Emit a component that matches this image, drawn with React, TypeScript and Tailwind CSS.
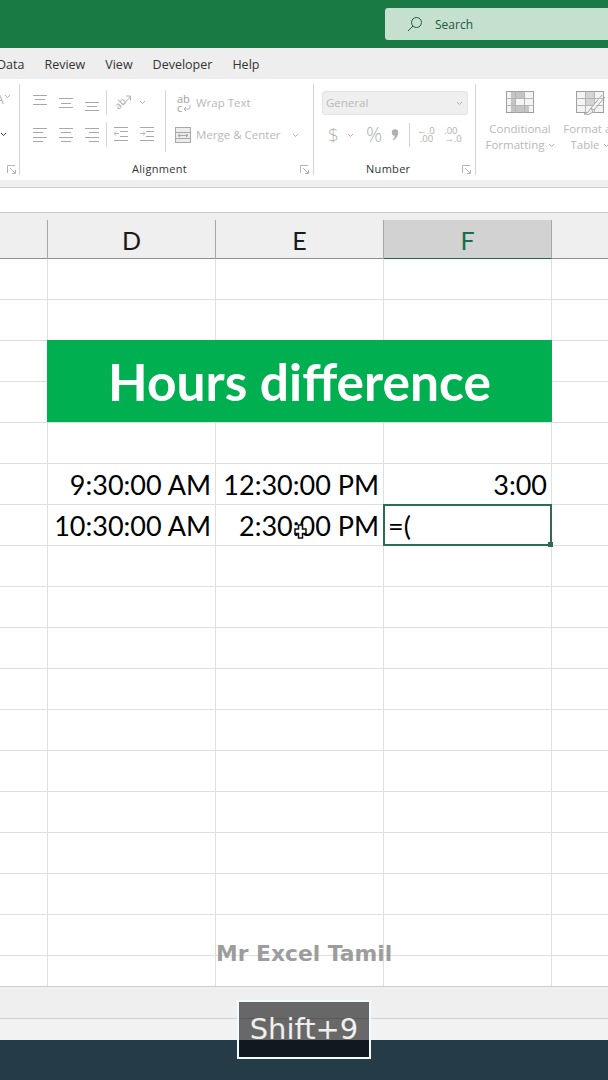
import { ReactNode } from "react";

const UI_FONT = "font-['Open_Sans','Noto_Sans',sans-serif]";
const ROW_COUNT = 18;

// Horizontal lines, used for all the alignment buttons
const Lines = ({ rows, children }: { rows: [number, number, number][]; children?: ReactNode }) => (
  <svg width="16" height="18" viewBox="0 0 16 18" className="shrink-0" stroke="#a8a8a8" strokeWidth="1" fill="none">
    {rows.map(([x1, x2, y], i) => (
      <line key={i} x1={x1} x2={x2} y1={y + 0.5} y2={y + 0.5} />
    ))}
    {children}
  </svg>
);

const Launcher = () => (
  <svg width="10" height="10" viewBox="0 0 10 10" fill="none" stroke="#b4b4b4" strokeWidth="1">
    <path d="M0.5 8V0.5H8" />
    <path d="M3 3l5 5M8.5 5v3.5H5" />
  </svg>
);

const Caret = ({ color = "#b0b0b0" }: { color?: string }) => (
  <svg width="7" height="5" viewBox="0 0 7 5" fill="none" stroke={color} strokeWidth="1">
    <path d="M1 1l2.5 2.5L6 1" />
  </svg>
);

const VSep = ({ h }: { h: string }) => <div className={`w-px shrink-0 bg-[#d4d4d4] ${h}`} />;

const AlignmentGroup = () => (
  <div className="my-[5px] flex w-[294px] shrink-0 flex-col border-r border-[#d4d4d4]">
    <div className="flex h-[72px] pl-[13px]">
      <div className="flex w-[73px] shrink-0 flex-col gap-[14px] pt-[11px]">
        <div className="flex h-[18px] gap-[10px]">
          <Lines rows={[[0, 14, 0], [2, 12, 4], [0, 14, 9]]} />
          <Lines rows={[[0, 14, 3], [2, 12, 8], [0, 14, 12]]} />
          <Lines rows={[[0, 14, 7], [2, 12, 11], [0, 14, 15]]} />
        </div>
        <div className="flex h-[18px] gap-[10px]">
          <Lines rows={[[0, 14, 1], [0, 10, 5], [0, 14, 10], [0, 10, 14]]} />
          <Lines rows={[[0, 14, 1], [2, 12, 5], [0, 14, 10], [2, 12, 14]]} />
          <Lines rows={[[0, 14, 1], [4, 14, 5], [0, 14, 10], [4, 14, 14]]} />
        </div>
      </div>
      <div className="flex w-[59px] shrink-0 flex-col gap-[7px] pt-[6px]">
        <div className="flex h-[25px] items-center">
          <VSep h="h-[25px]" />
          <span className={`ml-[7px] -rotate-45 text-[10px] leading-[10px] text-[#a8a8a8] ${UI_FONT}`}>ab</span>
          <svg width="8" height="12" viewBox="0 0 8 12" className="-ml-[3px] -mt-[6px]" fill="none" stroke="#b0b0b0" strokeWidth="1">
            <path d="M0 11L7 3M3 2h4.5v4.5" />
          </svg>
          <span className="ml-[8px]">
            <Caret />
          </span>
        </div>
        <div className="flex h-[25px] items-center">
          <VSep h="h-[25px]" />
          <span className="ml-[7px]">
            <Lines rows={[[0, 14, 1], [6, 14, 5], [6, 14, 10], [0, 14, 14]]}>
              <path d="M5 7.5H0M2 5.5l-2 2 2 2" stroke="#b8b8b8" />
            </Lines>
          </span>
          <span className="ml-[10px]">
            <Lines rows={[[0, 14, 1], [6, 14, 5], [6, 14, 10], [0, 14, 14]]}>
              <path d="M0 7.5h5M3 5.5l2 2-2 2" stroke="#b8b8b8" />
            </Lines>
          </span>
        </div>
      </div>
      <VSep h="h-[62px] mt-[6px]" />
      <div className="flex flex-col gap-[12px] whitespace-nowrap pl-[9px] pt-[9px]">
        <div className="flex h-[20px] items-center">
          <span className={`ml-[2px] w-[19px] text-[11px] leading-[9px] text-[#a0a0a0] ${UI_FONT}`}>
            ab
            <br />
            <span className="inline-flex items-center gap-[1px]">
              c
              <svg width="8" height="8" viewBox="0 0 8 8" fill="none" stroke="#b0b0b0" strokeWidth="1">
                <path d="M7 1v2a2 2 0 0 1-2 2H1M3 3L1 5l2 2" />
              </svg>
            </span>
          </span>
          <span className={`text-[11.5px] text-[#b8b8b8] ${UI_FONT}`}>Wrap Text</span>
        </div>
        <div className="flex h-[20px] items-center">
          <svg width="16" height="16" viewBox="0 0 16 16" fill="none" stroke="#a8a8a8" strokeWidth="1">
            <rect x="0.5" y="0.5" width="15" height="15" fill="#ececec" />
            <path d="M0 5.5h16M0 11.5h16M3 8.5h10M3 8.5l2-1.5M3 8.5l2 1.5M13 8.5l-2-1.5M13 8.5l-2 1.5" />
          </svg>
          <span className={`ml-[5px] text-[11.5px] text-[#b8b8b8] ${UI_FONT}`}>Merge &amp; Center</span>
          <span className="ml-[11px]">
            <Caret />
          </span>
        </div>
      </div>
    </div>
    <div className={`flex flex-1 items-end justify-between pl-[112px] pr-[3px] text-[11px] tracking-[0.3px] text-[#333] ${UI_FONT}`}>
      <span className="-mb-[2px] leading-[16px]">Alignment</span>
      <Launcher />
    </div>
  </div>
);

const NumberGroup = () => (
  <div className="my-[5px] flex w-[162px] shrink-0 flex-col border-r border-[#d4d4d4]">
    <div className="h-[72px] pl-[8px] pt-[7px]">
      <div className={`flex h-[24px] w-[146px] items-center justify-between rounded-[3px] border border-[#e2e2e2] bg-[#efefef] pl-[3px] pr-[4px] text-[11.5px] text-[#b8b8b8] ${UI_FONT}`}>
        General
        <Caret />
      </div>
      <div className={`mt-[8px] flex h-[24px] items-center text-[#b0b0b0] ${UI_FONT}`}>
        <span className="ml-[6px] w-[11px] text-[19px] font-light leading-[24px]">$</span>
        <span className="ml-[8px]">
          <Caret />
        </span>
        <span className="ml-[12px] text-[20px] font-light leading-[24px]">%</span>
        <svg width="8" height="12" viewBox="0 0 8 12" className="ml-[9px]" fill="#b0b0b0">
          <circle cx="4" cy="3.5" r="3.2" />
          <path d="M7 4q0 5-5 7.5l-.5-.8q2.5-2 2.5-4.5z" />
        </svg>
        <span className="ml-[10px] mr-[7px]">
          <VSep h="h-[24px]" />
        </span>
        <span className="w-[16px] text-right text-[9.5px] leading-[8px]">
          ←.0
          <br />
          .00
        </span>
        <span className="ml-[11px] w-[16px] text-[9.5px] leading-[8px]">
          .00
          <br />
          →.0
        </span>
      </div>
    </div>
    <div className={`flex flex-1 items-end justify-between pl-[52px] pr-[3px] text-[11px] tracking-[0.3px] text-[#333] ${UI_FONT}`}>
      <span className="-mb-[2px] leading-[16px]">Number</span>
      <Launcher />
    </div>
  </div>
);

const TableIcon = ({ brush }: { brush?: boolean }) => (
  <svg width="28" height="22" viewBox="0 0 28 22" className="overflow-visible" fill="none" stroke="#9e9e9e" strokeWidth="1">
    <rect x="0.5" y="0.5" width="27" height="21" fill="#f4f4f4" />
    {brush ? (
      <rect x="9" y="1" width="9" height="13" fill="#d4d4d4" stroke="none" />
    ) : (
      <path d="M5 1h13v7h-8v6h13v7H5z" fill="#c4c4c4" stroke="none" />
    )}
    <path d="M0 7.5h28M0 14.5h28M9.5 0v22M18.5 0v22" stroke="#b4b4b4" />
    {brush && <path d="M29 6L18 19M26 4L15 17L18 19M15 17q-2 5-7 6q5 2 9-2z" stroke="#a8a8a8" fill="#f4f4f4" />}
  </svg>
);

const StyleButton = ({ lines, brush }: { lines: [string, string]; brush?: boolean }) => (
  <div className={`flex w-[68px] shrink-0 flex-col items-center whitespace-nowrap text-[11.5px] leading-[16px] text-[#b8b8b8] ${UI_FONT}`}>
    <div className="mb-[8px] h-[22px]">
      <TableIcon brush={brush} />
    </div>
    <span>{lines[0]}</span>
    <span className="flex items-center gap-[3px]">
      {lines[1]}
      <Caret />
    </span>
  </div>
);

const Ribbon = () => (
  <div className="flex h-[101px] overflow-hidden bg-white shadow-[0_2px_3px_rgba(0,0,0,0.2)]">
    {/* left over of the Font group, cut off by the crop */}
    <div className="my-[5px] flex w-[20px] shrink-0 flex-col border-r border-[#d4d4d4]">
      <div className="h-[72px] pt-[6px] text-[12px] leading-[20px] text-[#b0b0b0]">
        <span className="flex items-start">
          <span className={`-ml-[4px] ${UI_FONT}`}>A</span>
          <span className="mt-[4px]">
            <Caret />
          </span>
        </span>
        <span className="mt-[22px] block">
          <Caret color="#333" />
        </span>
      </div>
      <div className="flex flex-1 items-end pl-[7px]">
        <Launcher />
      </div>
    </div>
    <AlignmentGroup />
    <NumberGroup />
    <div className="flex shrink-0 gap-[2px] pl-[10px] pt-[12px]">
      <StyleButton lines={["Conditional", "Formatting"]} />
      <StyleButton lines={["Format as", "Table"]} brush />
    </div>
  </div>
);

const Cell = ({ children }: { children?: ReactNode }) => (
  <div className="flex items-center justify-end whitespace-nowrap border-b border-r border-[#dfdfdf] pr-[4px] pt-[2px]">{children}</div>
);

const Sheet = () => {
  // row 2 and 3 hold the banner, rows 5 and 6 the times
  const cells: ReactNode[] = [];
  for (let r = 0; r < ROW_COUNT; r++) {
    cells.push(<Cell key={`${r}-a`} />);
    if (r === 2) {
      cells.push(
        <div
          key="banner"
          className="relative z-10 col-span-3 row-span-2 -ml-px -mt-px flex items-center justify-center whitespace-nowrap border-b border-[#dfdfdf] bg-[#00b050] pt-[1px] text-[51.5px] font-bold text-white"
        >
          Hours difference
        </div>
      );
    } else if (r !== 3) {
      const values = r === 5 ? ["9:30:00 AM", "12:30:00 PM", "3:00"] : r === 6 ? ["10:30:00 AM", "2:30:00 PM", ""] : ["", "", ""];
      values.forEach((v, c) => {
        if (r === 6 && c === 2) {
          cells.push(
            <div key="active" className="relative z-10 -ml-px -mt-px flex items-center justify-start border-2 border-[#2f6b52] bg-white pl-[3px] pt-[2px]">
              =(
              <span className="absolute -bottom-[3px] -right-[3px] h-[5px] w-[5px] bg-[#2f6b52]" />
            </div>
          );
        } else {
          cells.push(<Cell key={`${r}-${c}`}>{v}</Cell>);
        }
      });
    }
    cells.push(<div key={`${r}-z`} className="border-b border-[#dfdfdf]" />);
  }

  return (
    <div className="grid h-[727px] auto-rows-[41px] grid-cols-[48px_168px_168px_168px_56px] overflow-hidden font-['Lato',sans-serif] text-[27px] text-black">
      {cells}
    </div>
  );
};

const ColumnHeader = () => (
  <div className="h-[47px] border-b border-t border-b-[#8f8f8f] border-t-[#c8c8c8] bg-[#efefef] pt-[7px]">
    <div className="grid h-[39px] grid-cols-[48px_168px_168px_168px_56px] grid-rows-[39px] font-['Lato',sans-serif] text-[25px] leading-[30px] text-[#1a1a1a]">
      <div className="border-r border-[#a8a8a8]" />
      <div className="flex items-center justify-center border-r border-[#a8a8a8] pt-[1px]">D</div>
      <div className="flex items-center justify-center border-r border-[#a8a8a8] pt-[1px]">E</div>
      <div className="flex items-center justify-center border-b border-r border-b-[#1f6b45] border-r-[#a8a8a8] bg-[#d2d2d2] pt-[1px] text-[#1f6b45]">F</div>
      <div />
    </div>
  </div>
);

export default function App() {
  return (
    <div className={`relative flex h-[1080px] w-[608px] flex-col overflow-hidden bg-white ${UI_FONT}`}>
      {/* Title bar */}
      <div className="flex h-[48px] items-center justify-end bg-[#197b43] pl-[385px]">
        <div className="flex h-[32px] w-full items-center rounded-l-[3px] bg-[#c6e0d0] pl-[22px] text-[12px] text-[#23573c]">
          <svg width="16" height="16" viewBox="0 0 16 16" fill="none" stroke="#23573c" strokeWidth="1">
            <circle cx="9.5" cy="6.5" r="5" />
            <path d="M6 10l-5 5" />
          </svg>
          <span className="ml-[12px] pt-[1px]">Search</span>
        </div>
      </div>

      {/* Tabs */}
      <div className="flex h-[31px] items-center gap-[20px] bg-[#eeeeee] pt-[3px] text-[12.5px] text-[#333]">
        <span className="-ml-[3px]">Data</span>
        <span>Review</span>
        <span>View</span>
        <span>Developer</span>
        <span>Help</span>
      </div>

      <Ribbon />

      <div className="h-[8px] border-b border-[#cfcfcf] bg-[#efefef]" />
      {/* Formula bar */}
      <div className="h-[24px] bg-white" />

      <ColumnHeader />
      <Sheet />

      {/* Bottom bars */}
      <div className="h-[33px] border-b border-t border-[#cfcfcf] bg-[#efefef]" />
      <div className="h-[21px] bg-[#f2f2f2]" />
      <div className="flex-1 bg-[#253b47]" />

      {/* Overlays */}
      <svg width="13" height="15" viewBox="0 0 13 15" className="absolute left-[294px] top-[524px]" fill="#fff" stroke="#111" strokeWidth="1.5">
        <path d="M4.5 1h4v4h3.5v4.5H8.5V14h-4V9.500H1V5h3.500z" />
      </svg>
      <div className="absolute left-[216px] top-[940px] whitespace-nowrap font-['DejaVu_Sans',sans-serif] text-[21.8px] font-bold leading-[28px] text-[#8f8f8f]/90">
        Mr Excel Tamil
      </div>
      <div className="absolute left-[237px] top-[1000px] flex h-[59px] w-[134px] items-center justify-center border-2 border-[#f2fbff] bg-black/[0.57] font-['DejaVu_Sans',sans-serif] text-[29px] text-[#efefef]">
        Shift+9
      </div>
    </div>
  );
}
